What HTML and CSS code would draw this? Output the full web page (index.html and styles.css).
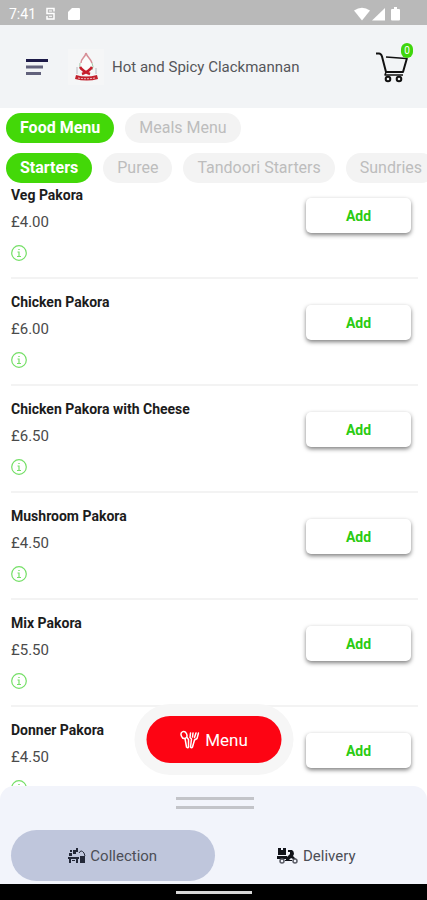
FILE: index.html
```
<!DOCTYPE html>
<html lang="en">
<head>
<meta charset="utf-8">
<meta name="viewport" content="width=device-width, initial-scale=1">
<title>Hot and Spicy Clackmannan</title>
<link rel="stylesheet" href="styles.css">
</head>
<body>
<div class="status">
  <span>7:41</span>
  <svg class="status-s" width="11" height="14" viewBox="0 0 11 14" fill="none" stroke="#fff" stroke-width="1.500"><path d="M9 4.500V1.500H2v5h7v5.500H2V9"/><path d="M4 4h3M4 9.300h3" stroke-width="1"/></svg>
  <svg class="status-sd" width="12" height="14" viewBox="0 0 12 14" fill="#fff"><path d="M4 1h7q1 0 1 1v10q0 1-1 1H1q-1 0-1-1V5z"/></svg>
  <svg class="status-net" width="47" height="14" viewBox="0 0 47 14" fill="#fff"><path d="M0 3.500Q8-2 16 3.500L8 13.500z"/><path d="M31 1v12.500H18z"/><path d="M40 0h3v2h2q1 0 1 1v9.500q0 1-1 1h-7q-1 0-1-1V3q0-1 1-1h2z"/></svg>
</div>
<header class="header">
  <button class="icon-button" aria-label="Open navigation">
    <svg width="24" height="18" viewBox="0 0 24 18"><path d="M1 2.500h22" stroke="#1d1a48" stroke-width="3"/><path d="M1 9h17M1 15.500h15" stroke="#62627c" stroke-width="3"/></svg>
  </button>
  <svg class="brand" width="36" height="36" viewBox="0 0 36 36" fill="none">
    <rect width="36" height="36" fill="#f5f6f7"/>
    <path d="M18 5c1 4 7 6 7 12 0 4-3 7-7 7s-8-3-7-8c1-5 6-6 7-11z" fill="#fbfcfb"/>
    <path d="M18 4c-1 5-5 5-5 10M18 4c1 4 5 6 6 10" stroke="#d78f97" stroke-width="1.500"/>
    <path d="M12 14q-1 4 1 7M24 14q2 4 0 7" stroke="#9fc5a5" stroke-width="1"/>
    <path d="M12 18c2 3 4 5 10 7M24 18c-2 3-4 5-10 7" stroke="#c61e2c" stroke-width="2.500"/>
    <path d="M9 18v7M28 19v6" stroke="#b8bbc0" stroke-width="1"/>
    <path d="M8 26q10 3 21 0l1 4q-11 3-23 0z" fill="#c2202c"/>
    <path d="M10 29q8 1.500 17 0" stroke="#efc6c8" stroke-width="1" stroke-dasharray="2 1"/>
  </svg>
  <h1 class="title">Hot and Spicy Clackmannan</h1>
  <button class="icon-button cart" aria-label="Basket, 0 items">
    <svg width="32" height="32" viewBox="0 0 32 32" fill="none" stroke="#111" stroke-width="2" stroke-linejoin="round"><path d="M0 2.500h3q2 0 3 3L10 21h17l4-14"/><path d="M10 6l20 1.500" stroke-width="1.500"/><path d="M10 21l-1 3h18" stroke-width="1.500"/><circle cx="12" cy="28" r="2.300"/><circle cx="23" cy="28" r="2.300"/></svg>
    <span class="badge">0</span>
  </button>
</header>
<nav class="tabs" aria-label="Menu categories">
  <div class="tab-row">
    <button class="tab active">Food Menu</button>
    <button class="tab">Meals Menu</button>
  </div>
  <div class="tab-row">
    <button class="tab active">Starters</button>
    <button class="tab">Puree</button>
    <button class="tab">Tandoori Starters</button>
    <button class="tab">Sundries</button>
  </div>
</nav>
<svg class="symbols" aria-hidden="true">
  <symbol id="info" viewBox="0 0 16 16"><g fill="none" stroke="#74df66"><circle cx="8" cy="8" r="7.300" stroke-width="1.200"/><path d="M6.500 7H8v4.500M6 11.500h4M7.300 4.500h1.400" stroke-width="1.200"/></g></symbol>
</svg>
<main class="list">
  <article class="item">
    <div class="details"><h2>Veg Pakora</h2><p>£4.00</p><button class="info" aria-label="About Veg Pakora"><svg width="16" height="16"><use href="#info"/></svg></button></div>
    <button class="add">Add</button>
  </article>
  <article class="item">
    <div class="details"><h2>Chicken Pakora</h2><p>£6.00</p><button class="info" aria-label="About Chicken Pakora"><svg width="16" height="16"><use href="#info"/></svg></button></div>
    <button class="add">Add</button>
  </article>
  <article class="item">
    <div class="details"><h2>Chicken Pakora with Cheese</h2><p>£6.50</p><button class="info" aria-label="About Chicken Pakora with Cheese"><svg width="16" height="16"><use href="#info"/></svg></button></div>
    <button class="add">Add</button>
  </article>
  <article class="item">
    <div class="details"><h2>Mushroom Pakora</h2><p>£4.50</p><button class="info" aria-label="About Mushroom Pakora"><svg width="16" height="16"><use href="#info"/></svg></button></div>
    <button class="add">Add</button>
  </article>
  <article class="item">
    <div class="details"><h2>Mix Pakora</h2><p>£5.50</p><button class="info" aria-label="About Mix Pakora"><svg width="16" height="16"><use href="#info"/></svg></button></div>
    <button class="add">Add</button>
  </article>
  <article class="item">
    <div class="details"><h2>Donner Pakora</h2><p>£4.50</p><button class="info" aria-label="About Donner Pakora"><svg width="16" height="16"><use href="#info"/></svg></button></div>
    <button class="add">Add</button>
  </article>
</main>
<footer class="sheet">
  <button class="menu-button">
    <svg width="20" height="20" viewBox="0 0 20 20" fill="none" stroke="#fff" stroke-width="1.500" stroke-linecap="round" stroke-linejoin="round"><ellipse cx="4.500" cy="5" rx="2.800" ry="3.600" transform="rotate(-20 4.500 5)"/><path d="M5.500 8.500L7 17q1.500 1.500 2 0V9.500L7.500 7.500"/><path d="M11 3l-.5 4.500L12 9l-1 8q1 1.500 2 0l2-7 2.500-1.500L19 3M13.500 3L13 7M16.500 3L15 7.500"/></svg>
    Menu
  </button>
  <div class="handle"></div>
  <div class="modes">
    <button class="mode selected">
      <svg width="18" height="16" viewBox="0 0 18 16" fill="#232838"><path d="M1 5h3v3H1zM2 2h2v2H2zM5 2h3v4H5zM8 0h2v4H8zM0 9h11v2H0zM1 11h2v4H1zM8 11h2v4H8zM4 12h3v1H4z"/><path d="M12 8h5v7h-5z"/><path d="M11 5q2-4 5 0l1 3" fill="none" stroke="#232838" stroke-width="1"/></svg>
      Collection
    </button>
    <button class="mode">
      <svg width="22" height="18" viewBox="0 0 22 18" fill="#11131a"><path d="M1 1h3v2h2V1h3v7H1zM0 9h10v3H0z"/><path d="M11 3h4q2 1 2 4l-1 2 3 3h-3l-2-1-2 2h-3v-2l4-4V5h-2z"/><g fill="none" stroke="#5a5c66" stroke-width="1.500"><circle cx="5" cy="14" r="2"/><circle cx="18" cy="14" r="2"/></g><path d="M8 13h7v1H8z"/></svg>
      Delivery
    </button>
  </div>
</footer>
<div class="system-bar"></div>
</body>
</html>
```
FILE: styles.css
```
* { box-sizing: border-box; margin: 0; }
body {
  display: flex;
  flex-direction: column;
  height: 100vh;
  overflow: hidden;
  background: #fff;
  color: #222;
  font-family: Roboto, "Liberation Sans", sans-serif;
}
button {
  border: 0;
  padding: 0;
  background: none;
  color: inherit;
  font: inherit;
  cursor: pointer;
}
svg { display: block; flex: none; }
.symbols { position: absolute; width: 0; height: 0; }
.status {
  display: flex;
  align-items: center;
  height: 25px;
  padding: 2px 26px 0 9px;
  background: #b9b9b9;
  color: #fff;
  font-size: 14px;
}
.status-s { margin-left: 9px; }
.status-sd { margin-left: 12px; }
.status-net { margin-left: auto; }
.header {
  display: flex;
  align-items: center;
  height: 83px;
  padding: 0 19px 0 25px;
  background: #f2f4f6;
}
.brand { margin-left: 19px; }
.title {
  margin-left: 8px;
  color: #55565a;
  font-size: 15px;
  font-weight: 400;
}
.cart { position: relative; margin-left: auto; }
.badge {
  position: absolute;
  top: -8px;
  right: -5px;
  width: 12px;
  border-radius: 6px;
  background: #3fd60c;
  color: #fff;
  font-size: 10px;
  line-height: 15px;
}
.tabs {
  display: flex;
  flex-direction: column;
  gap: 10px;
  padding: 5px 0 2px 6px;
  overflow: hidden;
}
.tab-row { display: flex; gap: 11px; }
.tab {
  flex: none;
  padding: 0 14px;
  border-radius: 15px;
  background: #f3f3f3;
  color: #bdbdbd;
  font-size: 16px;
  line-height: 30px;
}
.tab.active { background: #43d808; color: #fff; font-weight: 700; }
.list { flex: 1; min-height: 0; padding: 0 9px 0 11px; overflow: hidden; }
.item {
  display: flex;
  justify-content: space-between;
  align-items: flex-start;
  height: 107px;
  padding: 13px 7px 0 0;
  border-bottom: 2px solid #f3f3f3;
}
.item:first-child { height: 94px; padding-top: 0; }
.item h2 { color: #1c1c1c; font-size: 14px; font-weight: 700; line-height: 20px; }
.item p { margin-top: 7px; color: #4a4a4a; font-size: 15px; line-height: 20px; }
.info { display: block; margin-top: 13px; }
.add {
  width: 105px;
  height: 35px;
  margin-top: 13px;
  border-radius: 5px;
  background: #fff;
  box-shadow: 0 2px 4px rgba(0, 0, 0, .5);
  color: #2bcb12;
  font-size: 14px;
  font-weight: 700;
}
.sheet {
  position: relative;
  padding: 11px 9px 3px 11px;
  border-radius: 14px 14px 0 0;
  background: #f2f4fb;
}
.menu-button {
  position: absolute;
  top: -70px;
  left: 50%;
  display: flex;
  align-items: center;
  justify-content: center;
  gap: 6px;
  width: 135px;
  height: 47px;
  border-radius: 24px;
  transform: translateX(-50%);
  background: #fd0413;
  box-shadow: 0 0 0 12px #f6f6f6;
  color: #fff;
  font-size: 17px;
}
.handle {
  width: 78px;
  height: 12px;
  margin: 0 auto 21px;
  border: solid #c3c4c9;
  border-width: 3px 0;
}
.modes { display: flex; }
.mode {
  flex: 1;
  display: flex;
  align-items: center;
  justify-content: center;
  gap: 4px;
  height: 51px;
  border-radius: 26px;
  color: #4c4e56;
  font-size: 15px;
}
.mode.selected { background: #bfc6dc; }
.system-bar {
  display: flex;
  align-items: center;
  justify-content: center;
  height: 16px;
  background: #000;
}
.system-bar::before { content: ""; width: 76px; height: 3px; background: #d6d6d6; }
```
